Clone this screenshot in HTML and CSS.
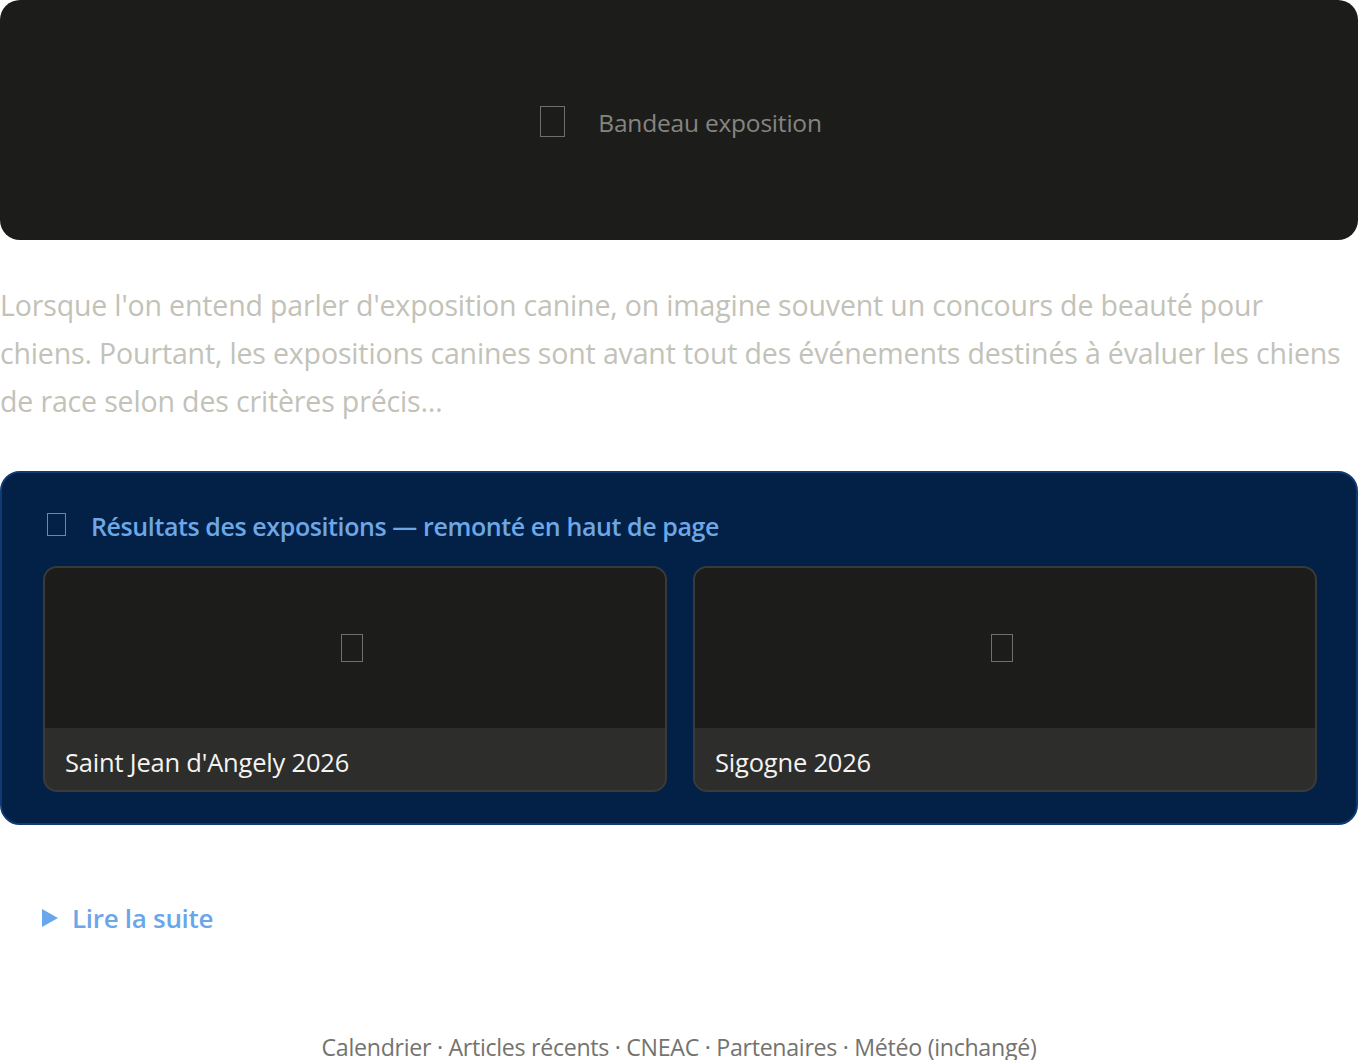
FILE: index.html
```html
<!DOCTYPE html>
<html lang="fr">
<head>
<meta charset="utf-8">
<title>Exposition canine</title>
<link rel="stylesheet" href="styles.css">
</head>
<body>
<main class="page">
  <header class="hero">
    <span class="glyph glyph-hero"></span>
    <span class="hero-label">Bandeau exposition</span>
  </header>

  <p class="intro">Lorsque l'on entend parler d'exposition canine, on imagine souvent un concours de beauté pour chiens. Pourtant, les expositions canines sont avant tout des événements destinés à évaluer les chiens de race selon des critères précis…</p>

  <section class="results">
    <h2 class="results-title"><span class="glyph glyph-title"></span>Résultats des expositions — remonté en haut de page</h2>
    <div class="cards">
      <article class="card">
        <div class="card-media"><span class="glyph glyph-card"></span></div>
        <div class="card-caption">Saint Jean d'Angely 2026</div>
      </article>
      <article class="card">
        <div class="card-media"><span class="glyph glyph-card"></span></div>
        <div class="card-caption">Sigogne 2026</div>
      </article>
    </div>
  </section>

  <details class="more">
    <summary>Lire la suite</summary>
  </details>

  <footer class="footer">Calendrier · Articles récents · CNEAC · Partenaires · Météo (inchangé)</footer>
</main>
</body>
</html>
```

FILE: styles.css
```css
* { box-sizing: border-box; }

html, body {
  margin: 0;
  padding: 0;
  background: #ffffff;
}

body {
  font-family: "Open Sans", "Noto Sans", sans-serif;
}

.page {
  width: 1358px;
}

/* empty-box placeholder glyphs */
.glyph {
  display: inline-block;
  border: 1.5px solid #6f6f6c;
}

.hero {
  height: 240px;
  background: #1c1c1b;
  border-radius: 20px;
  display: flex;
  align-items: center;
  justify-content: center;
  gap: 33px;
  padding: 2px 0 0 4px;
}

.glyph-hero {
  width: 25px;
  height: 31px;
}

.hero-label {
  font-size: 24.5px;
  color: #858580;
  letter-spacing: -0.2px;
  padding-top: 2px;
}

.intro {
  margin: 41px 0 46px;
  font-size: 28.5px;
  line-height: 48px;
  color: #c2c2b8;
  letter-spacing: -0.15px;
}

.results {
  background: #032046;
  border: 2px solid #0f3b72;
  border-radius: 20px;
  padding: 34px 39px 31px 41px;
}

.results-title {
  margin: 0 0 21px;
  display: flex;
  align-items: center;
  font-size: 25px;
  font-weight: 600;
  color: #6ea7e6;
  letter-spacing: -0.4px;
  line-height: 38px;
}

.glyph-title {
  width: 19px;
  height: 23px;
  margin: 0 25px 4px 4px;
  border-color: #6f86a8;
}

.cards {
  display: grid;
  grid-template-columns: 1fr 1fr;
  gap: 26px;
}

.card {
  border: 2px solid #3a3a39;
  border-radius: 14px;
  overflow: hidden;
  background: #2d2d2c;
}

.card-media {
  height: 160px;
  background: #1c1c1a;
  display: flex;
  align-items: center;
  justify-content: center;
  padding-right: 6px;
}

.glyph-card {
  width: 22px;
  height: 28px;
}

.card-caption {
  height: 62px;
  padding: 17px 20px 0;
  font-size: 25.5px;
  line-height: 34px;
  color: #f4f4f2;
  letter-spacing: -0.2px;
}

.more {
  margin: 75px 0 0 42px;
}

.more summary {
  list-style: none;
  display: flex;
  align-items: center;
  font-size: 26px;
  font-weight: 600;
  color: #6aa6ea;
  cursor: pointer;
  letter-spacing: -0.3px;
}

.more summary::-webkit-details-marker { display: none; }

.more summary::before {
  content: "";
  width: 0;
  height: 0;
  border-left: 16px solid #6aa6ea;
  border-top: 9px solid transparent;
  border-bottom: 9px solid transparent;
  margin-right: 14px;
}

.footer {
  margin-top: 95px;
  text-align: center;
  font-size: 23.2px;
  color: #737370;
  letter-spacing: -0.3px;
}
```
